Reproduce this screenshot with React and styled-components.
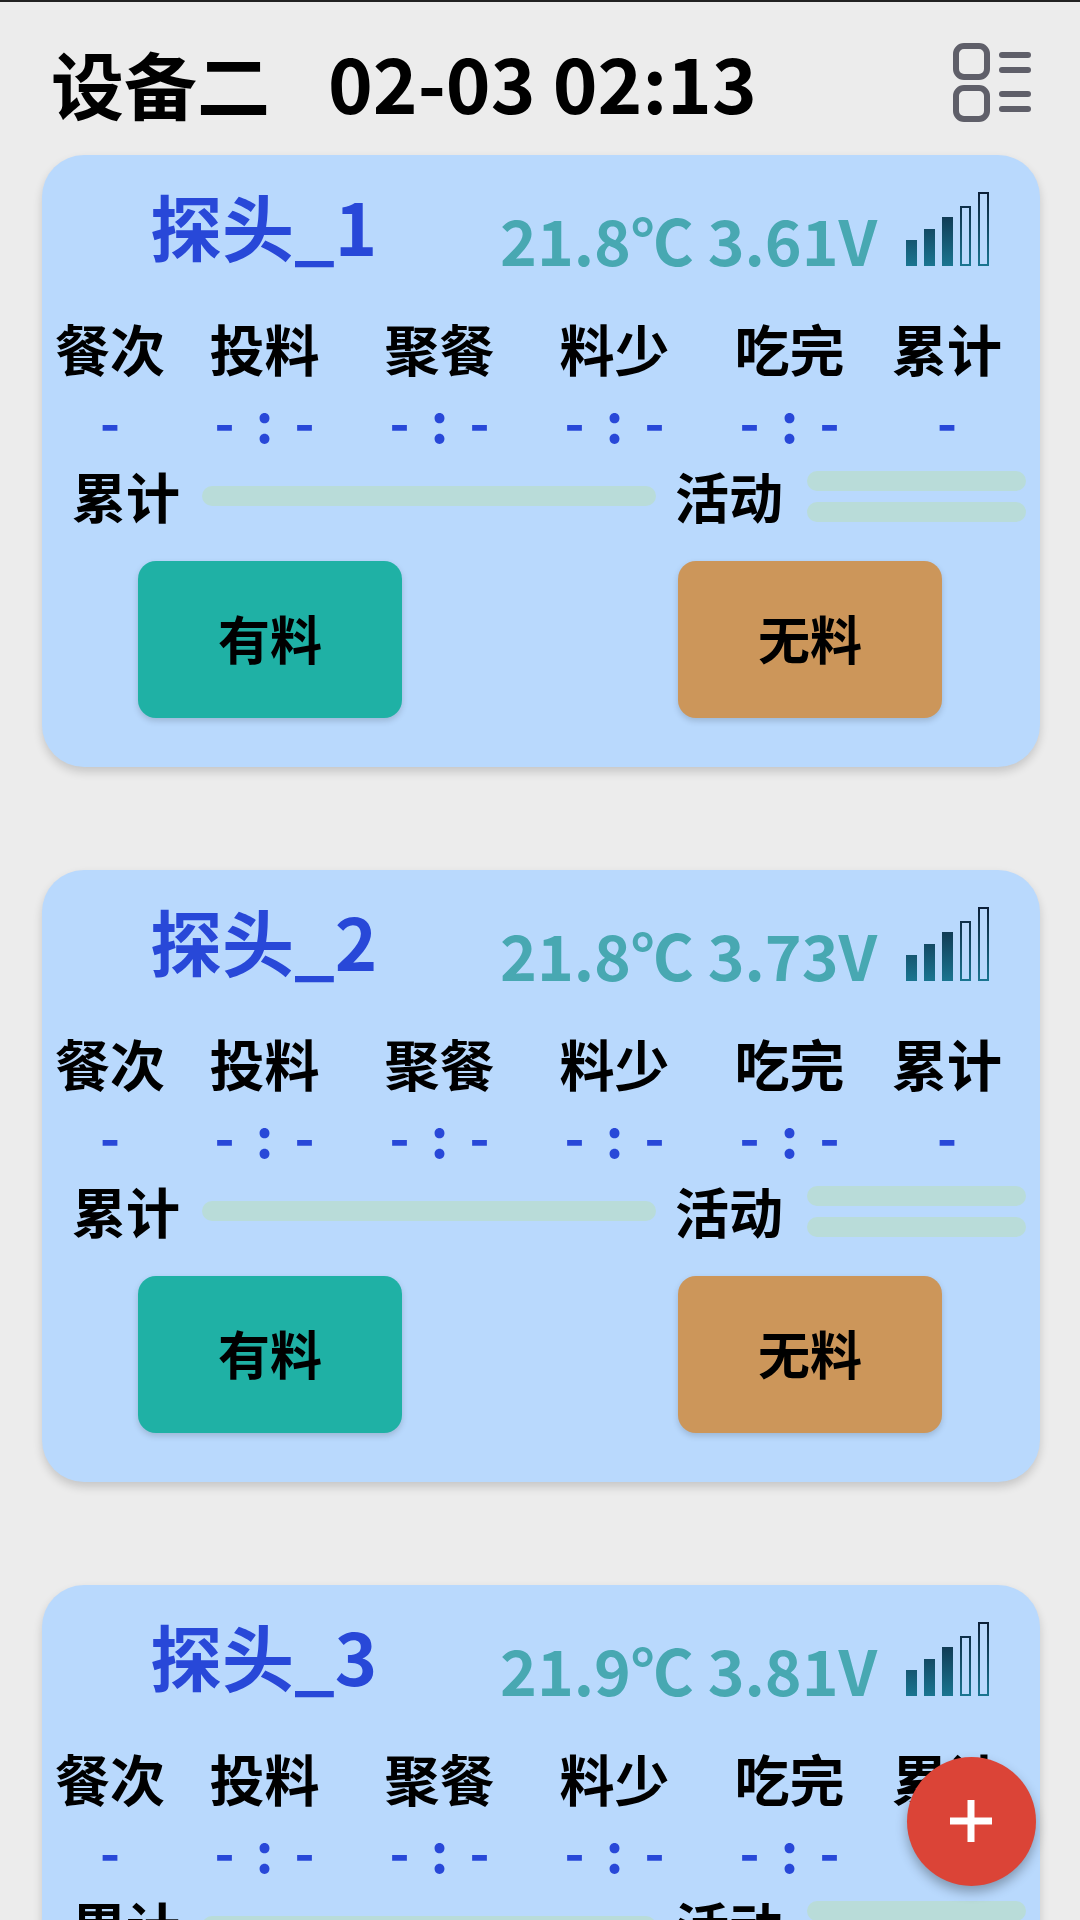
import React from "react";
import styled, { createGlobalStyle } from "styled-components";

const GlobalStyle = createGlobalStyle`
  html, body {
    margin: 0;
    padding: 0;
    height: 1920px;
    overflow: hidden;
    background: #ececec;
  }
  * {
    box-sizing: border-box;
  }
`;

const Page = styled.div`
  position: relative;
  width: 1080px;
  height: 1920px;
  overflow: hidden;
  background: #ececec;
  border-top: 2px solid #222;
  font-family: "Noto Sans CJK SC", "Noto Sans", sans-serif;
  font-weight: 700;
  color: #000;
`;

const Header = styled.header`
  display: flex;
  align-items: center;
  justify-content: space-between;
  height: 153px;
  padding: 0 47px 0 51px;
`;

const HeaderTitle = styled.h1`
  display: flex;
  align-items: baseline;
  margin: 5px 0 0;
  font-size: 73px;
  line-height: 1;
  font-weight: 700;
  white-space: pre;
`;

const HeaderTime = styled.span`
  margin-left: 58px;
  font-size: 76px;
`;

const MenuIcon = styled.svg`
  margin-top: 8px;
  flex: none;
`;

const CardList = styled.div`
  display: flex;
  flex-direction: column;
  gap: 103px;
  padding: 0 40px 0 42px;
`;

const Card = styled.section`
  flex: none;
  height: 612px;
  background: #b9d9fd;
  border-radius: 42px;
  box-shadow: 0 5px 10px rgba(0, 0, 0, 0.16);
`;

const TopRow = styled.div`
  display: flex;
  align-items: flex-start;
  height: 155px;
  padding-left: 108px;
`;

const ProbeName = styled.h2`
  margin: 25px 0 0;
  width: 350px;
  font-size: 72px;
  line-height: 90px;
  font-weight: 700;
  color: #2848d8;
`;

const Status = styled.div`
  margin-top: 45px;
  width: 406px;
  font-size: 62.5px;
  line-height: 78px;
  color: #48a8b2;
  white-space: nowrap;
`;

const SignalSvg = styled.svg`
  margin-top: 37px;
  flex: none;
`;

const StatGrid = styled.div`
  display: grid;
  grid-template-columns: 134px repeat(4, 175px) 140px;
  justify-items: center;
  padding-left: 1px;
`;

const StatLabel = styled.div`
  font-size: 55px;
  line-height: 74px;
  white-space: nowrap;
`;

const StatValue = styled.div`
  margin-top: 6px;
  height: 63px;
  font-size: 54px;
  line-height: 60px;
  word-spacing: 9px;
  color: #2848d8;
  white-space: pre;
`;

const GaugeRow = styled.div`
  display: flex;
  align-items: center;
  height: 56px;
  margin-top: 15px;
`;

const GaugeLabel = styled.div`
  flex: none;
  width: ${(p) => p.$width}px;
  padding-left: ${(p) => p.$indent}px;
  font-size: 54px;
  line-height: 56px;
  white-space: nowrap;
`;

const Track = styled.div`
  height: 20px;
  border-radius: 10px;
  background: #b9dcd9;
  width: ${(p) => p.$width}px;
`;

const TrackStack = styled.div`
  display: flex;
  flex-direction: column;
  gap: 11px;
`;

const ButtonRow = styled.div`
  display: flex;
  justify-content: space-between;
  padding: 0 98px 0 96px;
  margin-top: 37px;
`;

const FeedButton = styled.button`
  width: 264px;
  height: 157px;
  border: none;
  border-radius: 18px;
  background: ${(p) => p.$color};
  box-shadow: 0 3px 6px rgba(0, 0, 0, 0.16);
  font-family: inherit;
  font-size: 52px;
  font-weight: 700;
  color: #000;
  padding: 0 0 5px;
`;

const Fab = styled.button`
  position: absolute;
  left: 906.5px;
  top: 1754.5px;
  width: 129px;
  height: 129px;
  border: none;
  border-radius: 50%;
  background: #db4437;
  box-shadow: 0 6px 12px rgba(0, 0, 0, 0.3);
  display: flex;
  align-items: center;
  justify-content: center;
  padding: 0;
`;

const ListIcon = () => (
  <MenuIcon width="80" height="80" viewBox="0 0 80 80" fill="none">
    <rect x="3" y="3" width="31" height="31" rx="8" stroke="#5f5f69" strokeWidth="6" />
    <rect x="3" y="45" width="31" height="31" rx="8" stroke="#5f5f69" strokeWidth="6" />
    <g stroke="#5f5f69" strokeWidth="6" strokeLinecap="round">
      <path d="M49 12h26M49 27h26M49 51h26M49 66h26" />
    </g>
  </MenuIcon>
);

const Signal = ({ id }) => (
  <SignalSvg width="84" height="74" viewBox="0 0 84 74">
    <defs>
      <linearGradient id={id} gradientUnits="userSpaceOnUse" x1="0" y1="0" x2="0" y2="74">
        <stop offset="0" stopColor="#0c1f38" />
        <stop offset="1" stopColor="#1a7590" />
      </linearGradient>
    </defs>
    <rect x="0" y="48" width="11" height="26" fill={`url(#${id})`} />
    <rect x="18" y="37" width="11" height="37" fill={`url(#${id})`} />
    <rect x="36" y="25" width="11" height="49" fill={`url(#${id})`} />
    <rect x="55" y="15" width="9" height="58" fill="none" stroke={`url(#${id})`} strokeWidth="2" />
    <rect x="73" y="1" width="9" height="72" fill="none" stroke={`url(#${id})`} strokeWidth="2" />
  </SignalSvg>
);

const stats = [
  { label: "餐次", value: "-" },
  { label: "投料", value: "- : -" },
  { label: "聚餐", value: "- : -" },
  { label: "料少", value: "- : -" },
  { label: "吃完", value: "- : -" },
  { label: "累计", value: "-" },
];

const probes = [
  { name: "探头_1", status: "21.8℃ 3.61V" },
  { name: "探头_2", status: "21.8℃ 3.73V" },
  { name: "探头_3", status: "21.9℃ 3.81V" },
];

const App = () => {
  return (
    <Page>
      <GlobalStyle />
      <Header>
        <HeaderTitle>
          设备二
          <HeaderTime>02-03 02:13</HeaderTime>
        </HeaderTitle>
        <ListIcon />
      </Header>
      <CardList>
        {probes.map((probe, i) => (
          <Card key={probe.name}>
            <TopRow>
              <ProbeName>{probe.name}</ProbeName>
              <Status>{probe.status}</Status>
              <Signal id={`signal-${i}`} />
            </TopRow>
            <StatGrid>
              {stats.map((s) => (
                <StatLabel key={s.label}>{s.label}</StatLabel>
              ))}
              {stats.map((s) => (
                <StatValue key={s.label}>{s.value}</StatValue>
              ))}
            </StatGrid>
            <GaugeRow>
              <GaugeLabel $width={160} $indent={30}>累计</GaugeLabel>
              <Track $width={454} />
              <GaugeLabel $width={151} $indent={19}>活动</GaugeLabel>
              <TrackStack>
                <Track $width={219} />
                <Track $width={219} />
              </TrackStack>
            </GaugeRow>
            <ButtonRow>
              <FeedButton $color="#1fb1a5">有料</FeedButton>
              <FeedButton $color="#cc965a">无料</FeedButton>
            </ButtonRow>
          </Card>
        ))}
      </CardList>
      <Fab aria-label="add">
        <svg width="42" height="42" viewBox="0 0 42 42">
          <path d="M17.5 0h7v17.5H42v7H24.5V42h-7V24.5H0v-7h17.5z" fill="#fff" />
        </svg>
      </Fab>
    </Page>
  );
};

export default App;
